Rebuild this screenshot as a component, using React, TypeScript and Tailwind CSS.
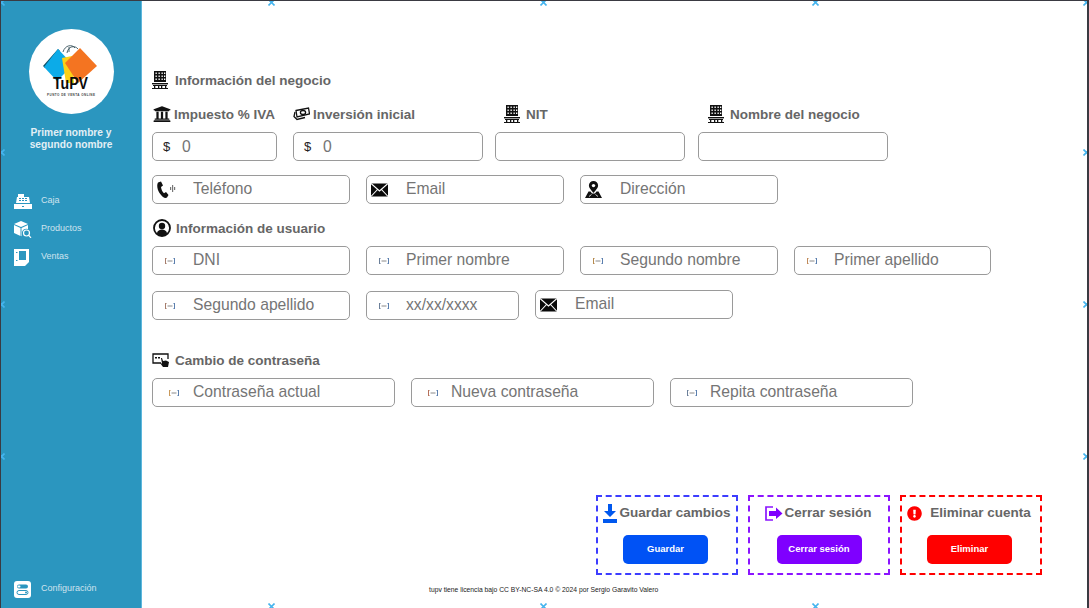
import React from "react";
import { FaUniversity, FaExclamationCircle } from "react-icons/fa";

const Building = () => (
  <svg width="16" height="18" viewBox="0 0 16 18" className="shrink-0">
    <rect x="2" y="0" width="12" height="11" fill="#111" />
    {[1.5, 4.5, 7.5].map((y) =>
      [3.5, 6.5, 9.5, 12].map((x) => <rect key={`${x}-${y}`} x={x} y={y} width="1.3" height="1.5" fill="#fff" />),
    )}
    <rect x="0" y="12" width="16" height="1.4" fill="#111" />
    <rect x="1" y="14" width="14" height="1" fill="#111" />
    <rect x="2" y="14" width="1.3" height="4" fill="#111" />
    <rect x="6" y="14" width="1.3" height="4" fill="#111" />
    <rect x="9" y="14" width="1.3" height="4" fill="#111" />
    <rect x="13" y="14" width="1.3" height="4" fill="#111" />
    <rect x="0" y="17" width="16" height="1" fill="#111" />
  </svg>
);

const Money = () => (
  <svg width="17" height="14" viewBox="0 0 17 14" fill="none" stroke="#111" strokeWidth="1.3" className="shrink-0">
    <path d="M3 3.5 15.5 1l1 6L4 10z" fill="#fff" />
    <path d="M2 5 1 9.5l3 3 8-2" />
    <ellipse cx="10" cy="5.5" rx="2.6" ry="2" />
  </svg>
);

const Phone = () => (
  <svg width="19" height="18" viewBox="0 0 19 18" className="shrink-0">
    <path
      d="M1 1.500 4 .5l2 4-2 1.500c.3 2.500 1.300 5 3 6.300L9 11l2.500 3-1.500 2.500C8.500 18 5 16 2.500 12 .3 8.500-.5 4 1 1.500z"
      fill="#111"
    />
    <rect x="13" y="6" width="1.200" height="3" fill="#777" />
    <rect x="15" y="4" width="1.200" height="7" fill="#777" />
    <rect x="17" y="6" width="1.200" height="3" fill="#777" />
  </svg>
);

const Envelope = () => (
  <svg width="17" height="14" viewBox="0 0 17 14" className="shrink-0">
    <rect x="0" y="0.5" width="17" height="13" fill="#0a0a0a" />
    <path d="M0 .5 8.500 8 17 .5M0 13.500l6.500-7M17 13.500l-6.500-7" fill="none" stroke="#fff" strokeWidth="1.100" />
  </svg>
);

const Pin = () => (
  <svg width="17" height="17" viewBox="0 0 17 17" className="shrink-0">
    <path d="M8.500 0a4.600 4.600 0 0 1 4.600 4.600C13.100 7.500 8.500 12 8.500 12S3.900 7.500 3.900 4.600A4.600 4.600 0 0 1 8.500 0z" fill="#111" />
    <circle cx="8.500" cy="4.600" r="1.700" fill="#fff" />
    <path d="M3.500 10.500h2L7 12.500h3l1.500-2h2L17 17H0z" fill="#111" />
    <path d="M4 15.500l2.500-2M13 15.500l-2.500-2" stroke="#fff" strokeWidth="0.800" />
  </svg>
);

const Span = ({ c = "#6b7f99" }: { c?: string }) => (
  <svg width="10" height="6" viewBox="0 0 10 6" fill="none" strokeWidth="1" className="shrink-0">
    <path d="M.5 0v6M.5 .5h1M.5 5.500h1" stroke={c} />
    <path d="M2.500 3h5" stroke="#8a8a8a" />
    <path d="M9.500 0v6M9.500 .5h-1M9.500 5.500h-1" stroke="#5b7fae" />
  </svg>
);

const UserRing = () => (
  <svg width="18" height="18" viewBox="0 0 18 18" className="shrink-0">
    <circle cx="9" cy="9" r="8" fill="#fff" stroke="#111" strokeWidth="1.800" />
    <circle cx="9" cy="7" r="3.200" fill="#111" />
    <path d="M3.800 14.500c.8-3 2.800-4 5.200-4s4.400 1 5.200 4A8 8 0 0 1 9 17a8 8 0 0 1-5.200-2.500z" fill="#111" />
  </svg>
);

const Password = () => (
  <svg width="18" height="14" viewBox="0 0 18 14" className="shrink-0">
    <path d="M9 10H1V1h15v5" fill="none" stroke="#111" strokeWidth="1.300" />
    <rect x="3" y="4" width="2" height="1.500" fill="#111" />
    <rect x="6" y="4" width="2" height="1.500" fill="#111" />
    <path d="M9 5l1 0 1 3 3-.5 3 1.500-1 5h-5l-3-4 2 .5z" fill="#111" />
  </svg>
);

const Download = () => (
  <svg width="14" height="19" viewBox="0 0 14 19" className="shrink-0">
    <path d="M5 0h4v7h4l-6 6-6-6h4z" fill="#0058ee" />
    <rect x="0" y="15" width="14" height="4" fill="#0058ee" />
  </svg>
);

const Exit = () => (
  <svg width="18" height="15" viewBox="0 0 18 15" className="shrink-0">
    <path d="M8 1H1v13h7" fill="none" stroke="#8b14ff" strokeWidth="1.700" />
    <path d="M4 5h7V1.500L17.500 7.500 11 13V10H4z" fill="#7f00ff" />
  </svg>
);

const Register = () => (
  <svg width="18" height="15" viewBox="0 0 18 15" className="shrink-0">
    <rect x="4" y="0" width="6" height="3" fill="#fff" />
    <path d="M3 3h12l1 6H2z" fill="#fff" />
    <g fill="#2b96bf">
      <rect x="5" y="4" width="2" height="1" />
      <rect x="8" y="4" width="2" height="1" />
      <rect x="11" y="4" width="2" height="1" />
      <rect x="5" y="6" width="2" height="1" />
      <rect x="8" y="6" width="2" height="1" />
      <rect x="11" y="6" width="2" height="1" />
    </g>
    <rect x="0" y="10" width="18" height="5" fill="#fff" />
    <rect x="8" y="12" width="2" height="1" fill="#2b96bf" />
  </svg>
);

const BoxSearch = () => (
  <svg width="18" height="17" viewBox="0 0 18 17" className="shrink-0">
    <path d="M7 0l7 3-7 3-7-3z" fill="#fff" />
    <path d="M0 4l6.500 3v8L0 12zM14 4v4a5 5 0 0 0-6 3v4l-.500.200V7z" fill="#fff" />
    <circle cx="12.500" cy="12" r="3" fill="none" stroke="#fff" strokeWidth="1.200" />
    <path d="M14.500 14.200 17 16.800" stroke="#fff" strokeWidth="1.200" />
  </svg>
);

const Doc = () => (
  <svg width="15" height="17" viewBox="0 0 15 17" className="shrink-0">
    <path d="M0 0h15v13l-4 4H0z" fill="#fff" />
    <rect x="5" y="2" width="7" height="9" fill="#2b96bf" />
    <rect x="2" y="3" width="1.500" height="1" fill="#2b96bf" />
    <rect x="2" y="11" width="1.500" height="1" fill="#2b96bf" />
  </svg>
);

const Toggles = () => (
  <svg width="17" height="17" viewBox="0 0 17 17" className="shrink-0">
    <rect width="17" height="17" rx="3" fill="#fff" />
    <rect x="3" y="3.500" width="11" height="4" rx="2" fill="#2b96bf" />
    <rect x="3.500" y="4.500" width="3" height="2" rx="1" fill="#fff" />
    <rect x="3" y="9.500" width="11" height="4" rx="2" fill="none" stroke="#2b96bf" />
    <circle cx="12" cy="11.500" r="1" fill="#2b96bf" />
  </svg>
);

const Logo = () => (
  <svg width="68" height="68" viewBox="0 0 68 68">
    <path d="M21 11 6 28l2 2L23 13z" fill="#0d4f66" />
    <path d="M21 11 7 29 20 43 36 27z" fill="#0cabe8" />
    <path d="M25 20 35 18 37 45H29z" fill="#fcd116" />
    <path d="M43 10 60 28 41 45 28 25z" fill="#f47421" />
    <path d="M26 14c2-7 9-8 12-4M30 15c1-7 8-8 11-4M32 9v5" fill="none" stroke="#24414d" strokeWidth="0.800" />
    <text x="33.500" y="51" textAnchor="middle" className="font-['Liberation_Sans',sans-serif] font-bold text-[16px]" fill="#0a0a0a" textLength="35" lengthAdjust="spacingAndGlyphs">TuPV</text>
    <text x="34" y="58" textAnchor="middle" className="font-['Liberation_Sans',sans-serif] font-bold text-[3px]" fill="#444" textLength="48">PUNTO DE VENTA ONLINE</text>
  </svg>
);

const Field = ({
  w,
  icon,
  ph,
  cls = "",
  lead = "w-[39px]",
}: {
  w: string;
  icon: React.ReactNode;
  ph: string;
  cls?: string;
  lead?: string;
}) => (
  <label className={`flex h-[29px] ${w} items-center rounded-[5px] border border-[#9a9a9a] bg-white ${cls}`}>
    <span className={`flex h-full ${lead} shrink-0 items-center`}>{icon}</span>
    <input
      placeholder={ph}
      className="h-full min-w-0 flex-1 bg-transparent pb-[2px] text-[15.7px] text-[#757575] outline-none placeholder:text-[#757575]"
    />
  </label>
);

const SpanIcon = ({ c, pad = "pl-3" }: { c?: string; pad?: string }) => (
  <span className={pad}>
    <Span c={c} />
  </span>
);

const LeadIcon = ({ children }: { children: React.ReactNode }) => <span className="pl-1">{children}</span>;

const Heading = ({ icon, text, cls = "" }: { icon: React.ReactNode; text: string; cls?: string }) => (
  <div className={`flex h-[18px] items-center text-[13.5px] font-bold text-[#666] ${cls}`}>
    {icon}
    <span className="translate-y-px">{text}</span>
  </div>
);

const Money2 = ({ w }: { w: string }) => (
  <div className={`flex h-[29px] ${w} items-center rounded-[5px] border border-[#9a9a9a] pl-[10px] text-[15.7px] text-[#757575]`}>
    <span className="w-[19px] text-[13px] text-[#222]">$</span>
    <span>0</span>
  </div>
);

const Action = ({
  border,
  icon,
  title,
  button,
  bg,
  gap,
  btnCls = "",
}: {
  border: string;
  icon: React.ReactNode;
  title: string;
  button: string;
  bg: string;
  gap: string;
  btnCls?: string;
}) => (
  <div className={`flex h-[80px] w-[142px] flex-col items-center border-2 border-dashed ${border}`}>
    <div className={`mt-[6px] flex h-[20px] items-center ${gap} text-[13.5px] font-bold whitespace-nowrap text-[#666]`}>
      {icon}
      <span>{title}</span>
    </div>
    <button className={`mt-[12px] h-[29px] w-[85px] rounded-[5px] text-[9.5px] font-bold text-white ${bg} ${btnCls}`}>{button}</button>
  </div>
);

const Nav = ({ icon, text, cls = "" }: { icon: React.ReactNode; text: string; cls?: string }) => (
  <div className={`flex h-[28px] items-center pl-[13px] text-[9px] text-[#cfe3ee] ${cls}`}>
    <span className="flex w-[27px] items-center">{icon}</span>
    {text}
  </div>
);

const handles: [number, number][] = [
  [271, 2], [543, 2], [815, 2],
  [271, 606], [543, 606], [815, 606],
  [1, 152], [1, 304], [1, 456],
  [1086, 152], [1086, 304], [1086, 456],
  [1086, 2], [1, 2],
];

export default function App() {
  return (
    <div className="relative flex h-[608px] w-[1089px] overflow-hidden border-t border-r-2 border-l border-[#3a3a42] bg-white font-['Liberation_Sans',Arial,sans-serif]">
      <aside className="flex w-[141px] shrink-0 flex-col border-r border-[#5cb7dd] bg-[#2b96bf]">
        <div className="mx-auto mt-[28px] flex h-[85px] w-[85px] items-center justify-center rounded-full bg-white">
          <Logo />
        </div>
        <div className="mt-[13px] text-center text-[10.2px] leading-[12px] font-bold text-[#e2eff5]">
          Primer nombre y
          <br />
          segundo nombre
        </div>
        <div className="mt-[36px]">
          <Nav icon={<Register />} text="Caja" />
          <Nav icon={<BoxSearch />} text="Productos" />
          <Nav icon={<Doc />} text="Ventas" />
        </div>
        <Nav icon={<Toggles />} text="Configuración" cls="mt-auto mb-[5px]" />
      </aside>

      <main className="flex min-w-0 flex-1 flex-col pt-[70px] pl-[10px]">
        <Heading icon={<Building />} text="Información del negocio" cls="gap-[7px]" />

        <div className="mt-[16px] flex items-start">
          <div className="w-[125px]">
            <Heading icon={<FaUniversity className="h-[18px] w-[18px] text-[#111]" />} text="Impuesto % IVA" cls="gap-[3px] pl-px" />
            <Money2 w="w-[125px] mt-[9px]" />
          </div>
          <div className="ml-[16px] w-[190px]">
            <Heading icon={<Money />} text="Inversión inicial" cls="gap-[3px]" />
            <Money2 w="w-[190px] mt-[9px]" />
          </div>
          <div className="ml-[12px] w-[190px]">
            <Heading icon={<Building />} text="NIT" cls="gap-[6px] pl-[9px]" />
            <div className="mt-[9px] h-[29px] rounded-[5px] border border-[#9a9a9a]" />
          </div>
          <div className="ml-[13px] w-[190px]">
            <Heading icon={<Building />} text="Nombre del negocio" cls="gap-[6px] pl-[10px]" />
            <div className="mt-[9px] h-[29px] rounded-[5px] border border-[#9a9a9a]" />
          </div>
        </div>

        <div className="mt-[14px] flex gap-4">
          <Field w="w-[198px]" lead="w-[40px]" icon={<LeadIcon><Phone /></LeadIcon>} ph="Teléfono" />
          <Field w="w-[198px]" icon={<LeadIcon><Envelope /></LeadIcon>} ph="Email" />
          <Field w="w-[198px]" icon={<LeadIcon><Pin /></LeadIcon>} ph="Dirección" />
        </div>

        <Heading icon={<UserRing />} text="Información de usuario" cls="mt-[15px] gap-[5px] pl-px" />

        <div className="mt-[9px] flex gap-4">
          <Field w="w-[198px]" lead="w-[40px]" icon={<SpanIcon c="#a57c6b" />} ph="DNI" />
          <Field w="w-[198px]" icon={<SpanIcon />} ph="Primer nombre" />
          <Field w="w-[198px]" icon={<SpanIcon c="#b58a4f" />} ph="Segundo nombre" />
          <Field w="w-[197px]" icon={<SpanIcon c="#c08a5a" />} ph="Primer apellido" />
        </div>

        <div className="mt-[16px] flex items-start gap-4">
          <Field w="w-[198px]" lead="w-[40px]" icon={<SpanIcon c="#a57c6b" />} ph="Segundo apellido" />
          <Field w="w-[153px]" icon={<SpanIcon />} ph="xx/xx/xxxx" />
          <Field w="w-[198px]" cls="-mt-px" icon={<LeadIcon><Envelope /></LeadIcon>} ph="Email" />
        </div>

        <Heading icon={<Password />} text="Cambio de contraseña" cls="mt-[31px] gap-[5px]" />

        <div className="mt-[9px] flex gap-4">
          <Field w="w-[243px]" lead="w-[40px]" icon={<SpanIcon c="#c9995a" pad="pl-4" />} ph="Contraseña actual" />
          <Field w="w-[243px]" icon={<SpanIcon c="#b5705a" pad="pl-4" />} ph="Nueva contraseña" />
          <Field w="w-[243px]" icon={<SpanIcon pad="pl-4" />} ph="Repita contraseña" />
        </div>

        <div className="mt-[88px] ml-[444px] flex gap-[10px]">
          <Action border="border-[#3d3dff]" icon={<Download />} title="Guardar cambios" button="Guardar" bg="bg-[#0052f5]" gap="gap-[2px]" btnCls="mr-[3px]" />
          <Action border="border-[#8b14ff]" icon={<Exit />} title="Cerrar sesión" button="Cerrar sesión" bg="bg-[#7f00ff]" gap="gap-px mr-[1px]" />
          <Action border="border-[#ff0000]" icon={<FaExclamationCircle className="h-[15px] w-[15px] text-[#ff0000]" />} title="Eliminar cuenta" button="Eliminar" bg="bg-[#ff0000]" gap="gap-[8px] mr-[4px]" btnCls="mr-[3px]" />
        </div>

        <div className="mt-[10px] ml-[277px] text-[6.75px] leading-[10px] whitespace-nowrap text-[#222]">
          tupv tiene licencia bajo CC BY-NC-SA 4.0 © 2024 por Sergio Garavito Valero
        </div>
      </main>

      {handles.map(([x, y]) => (
        <svg
          key={`${x}-${y}`}
          width="7"
          height="7"
          viewBox="0 0 7 7"
          className="pointer-events-none absolute"
          style={{ left: x - 4, top: y - 4 }}
        >
          <path d="M.5.5l6 6M6.500.5l-6 6" stroke="#45b4ee" strokeWidth="1.600" />
        </svg>
      ))}
    </div>
  );
}
